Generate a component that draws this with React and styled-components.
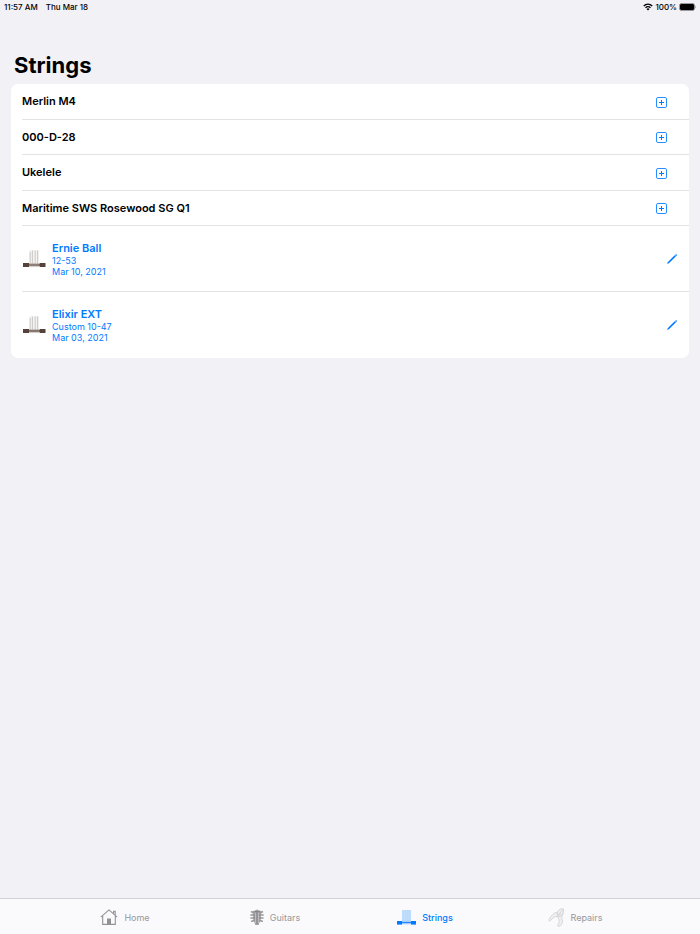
import React from 'react'
import styled, { createGlobalStyle } from 'styled-components'

const guitars = ['Merlin M4', '000-D-28', 'Ukelele', 'Maritime SWS Rosewood SG Q1']

const stringSets = [
  { name: 'Ernie Ball', gauge: '12-53', date: 'Mar 10, 2021' },
  { name: 'Elixir EXT', gauge: 'Custom 10-47', date: 'Mar 03, 2021' }
]

const WifiIcon = () => (
  <svg width='10' height='8' viewBox='0 0 20 16' fill='none' stroke='#000' strokeWidth='2.8'>
    <path d='M1.5 6 C6.5 1.2 13.5 1.2 18.5 6' />
    <path d='M5 9.6 C8 6.8 12 6.8 15 9.6' />
    <path d='M10 15 L7 11.8 C8.8 10.3 11.2 10.3 13 11.8 Z' fill='#000' stroke='none' />
  </svg>
)

const BatteryIcon = () => (
  <svg width='17' height='8' viewBox='0 0 17 8'>
    <rect x='0.5' y='0.5' width='15' height='7' rx='2' fill='#000' stroke='#98989d' />
    <path d='M16.2 2.8 V5.2 C17.2 4.8 17.2 3.2 16.2 2.8 Z' fill='#8e8e93' />
  </svg>
)

const PlusIcon = () => (
  <svg width='11' height='11' viewBox='0 0 11 11' fill='none' stroke='#007aff'>
    <rect x='0.5' y='0.5' width='10' height='10' rx='1.4' strokeOpacity='0.85' />
    <path d='M5.5 3 V8 M3 5.5 H8' />
  </svg>
)

const PencilIcon = () => (
  <svg width='10' height='10' viewBox='0 0 10 10'>
    <path d='M0.2 9.9 L0.7 8.2 L7.7 1.3 L8.8 2.4 L1.9 9.3 Z' fill='#007aff' />
    <path d='M8 1.1 L8.6 0.4 Q9.2 0 9.7 0.5 Q10.1 1 9.7 1.5 L9 2.2 Z' fill='#007aff' />
  </svg>
)

const BridgeIcon = () => (
  <svg width='24' height='20' viewBox='0 0 24 20'>
    <rect x='7' y='1' width='10' height='14' fill='#f5f4f3' />
    <path d='M8.2 3 V15 M10.4 1.5 V15 M13.2 1.5 V15 M15.6 1.5 V15' stroke='#c6c2bf' strokeWidth='0.9' />
    <rect x='1' y='14' width='6' height='4' fill='#56423a' />
    <rect x='17.5' y='14' width='6' height='4' fill='#56423a' />
    <path d='M7 14.6 H18' stroke='#b9b1ac' strokeWidth='0.8' />
    <path d='M7 16 H18' stroke='#5d4a42' strokeWidth='1.4' />
    <path d='M7 17.6 H18' stroke='#c4bcb6' strokeWidth='0.8' />
  </svg>
)

const HomeIcon = () => (
  <svg width='18' height='16' viewBox='0 0 18 16' fill='none' stroke='#929296' strokeWidth='1.1'>
    <path d='M0.8 8.2 L9 0.9 L17.2 8.2' />
    <path d='M2.7 7 V15.4 H15.3 V7' />
    <path d='M13.6 4.4 V2.2 H15.2 V6' />
    <rect x='7' y='9.5' width='4' height='6' fill='#929296' stroke='none' />
  </svg>
)

const HeadstockIcon = () => (
  <svg width='14' height='17' viewBox='0 0 14 17' fill='#a2a2a6'>
    <path d='M2.6 2 Q5 1.6 7 0.4 Q9 1.6 11.4 2 L10.6 12 L9.2 14 L8.8 16 H5.2 L4.8 14 L3.4 12 Z' />
    <path
      d='M1.6 2.8 L3 3.4 M12.4 2.8 L11 3.4 M0.9 6 H3 M13.1 6 H11 M1 9 H3.4 M13 9 H10.6 M1.8 12.2 L4 11.6 M12.2 12.2 L10 11.6'
      stroke='#98989c'
      strokeWidth='1.6'
      strokeLinecap='round'
    />
    <path d='M5.6 4 V14 M8.4 4 V14' stroke='#cdcdd0' strokeWidth='0.7' />
    <path d='M7 3 V15' stroke='#86868a' strokeWidth='1' />
    <path d='M3.6 6 H5 M9 6 H10.4 M3.8 9 H5 M9 9 H10.2 M4.2 2.6 H9.8' stroke='#7f7f84' strokeWidth='0.9' />
  </svg>
)

const StringsIcon = () => (
  <svg width='19' height='15' viewBox='0 0 19 15'>
    <rect x='5' y='0' width='9' height='12' fill='#c3e0fe' />
    <path d='M6.3 1 V11 M8.6 0 V11 M10.8 0 V11 M13 0 V11' stroke='#b0d5fc' strokeWidth='0.7' />
    <path d='M5 11.3 H14 M5 13.8 H14' stroke='#8fc4fc' strokeWidth='0.8' />
    <path d='M5 12.6 H14' stroke='#2388fa' strokeWidth='1.2' />
    <rect x='0' y='11' width='5' height='3.6' fill='#007aff' />
    <rect x='14' y='11' width='5' height='3.6' fill='#007aff' />
  </svg>
)

const PliersIcon = () => (
  <svg width='17' height='19' viewBox='0 0 17 19' fill='#efeff1' stroke='#cfcfd2' strokeWidth='0.8'>
    <path d='M9.4 4.4 Q7.4 4.2 6 5.4 Q1.6 8.6 0.7 12.4 Q1.6 14 2.8 12.4 Q4.6 9.2 7.4 8.6 L10 8.4 Z' />
    <path d='M15.2 5.2 Q13.6 8 13.8 10.4 Q15.6 13.4 13.6 16.4 Q12.2 18.8 10 18.2 Q8.8 17.2 10.4 16 Q12 13.8 10.8 11.6 Q9.6 9 10 7 Z' />
    <path d='M15.6 1 Q12 0 9.8 3 Q8.6 5.2 9.6 7.8 Q11.8 9 13.6 7.4 Q16 4.6 15.6 1 Z' />
    <path d='M14.8 1.6 L11.6 5.6' />
    <circle cx='11.4' cy='6.4' r='0.9' />
  </svg>
)

const tabs = [
  { label: 'Home', icon: HomeIcon },
  { label: 'Guitars', icon: HeadstockIcon },
  { label: 'Strings', icon: StringsIcon, active: true },
  { label: 'Repairs', icon: PliersIcon }
]

function App () {
  return (
    <>
      <GlobalStyle />
      <Page>
        <StatusBar>
          <StatusGroup $gap='8px'>
            <span>11:57 AM</span>
            <span>Thu Mar 18</span>
          </StatusGroup>
          <StatusGroup $gap='2px'>
            <WifiIcon />
            <span>100%</span>
            <BatteryIcon />
          </StatusGroup>
        </StatusBar>
        <Main>
          <Title>Strings</Title>
          <Card>
            <GuitarList>
              {guitars.map(guitar => (
                <GuitarRow key={guitar}>
                  <GuitarName>{guitar}</GuitarName>
                  <IconButton type='button' aria-label={`Add strings to ${guitar}`}>
                    <PlusIcon />
                  </IconButton>
                </GuitarRow>
              ))}
            </GuitarList>
            <StringList>
              {stringSets.map(set => (
                <StringRow key={set.name}>
                  <StringLink href='#strings'>
                    <BridgeIcon />
                    <div>
                      <StringName>{set.name}</StringName>
                      <Detail>{set.gauge}</Detail>
                      <Detail>{set.date}</Detail>
                    </div>
                  </StringLink>
                  <IconButton type='button' aria-label={`Edit ${set.name}`}>
                    <PencilIcon />
                  </IconButton>
                </StringRow>
              ))}
            </StringList>
          </Card>
        </Main>
        <TabBar>
          <TabList>
            {tabs.map(({ label, icon: Icon, active }) => (
              <Tab
                key={label}
                href={`#${label.toLowerCase()}`}
                $active={active}
                aria-current={active ? 'page' : undefined}
              >
                <Icon />
                {label}
              </Tab>
            ))}
          </TabList>
        </TabBar>
      </Page>
    </>
  )
}

export default App

const GlobalStyle = createGlobalStyle`
  * {
    box-sizing: border-box;
  }

  body {
    margin: 0;
    background: #f2f1f6;
    color: #000;
    font-family: Inter, 'Liberation Sans', sans-serif;
  }

  svg {
    display: block;
    flex: none;
  }
`

const Page = styled.div`
  display: flex;
  flex-direction: column;
  min-height: 100vh;
`

const StatusBar = styled.header`
  display: flex;
  justify-content: space-between;
  padding: 1px 4px 0;
  font-size: 8px;
  font-weight: 500;
  line-height: 12px;
`

const StatusGroup = styled.div`
  display: flex;
  align-items: center;
  gap: ${props => props.$gap};
`

const Main = styled.main`
  flex: 1;
  padding: 37px 11px 24px;
`

const Title = styled.h1`
  margin: 0 0 4px 3px;
  font-size: 22px;
  font-weight: 700;
  line-height: 30px;
`

const Card = styled.section`
  background: #fff;
  border-radius: 7px;
  overflow: hidden;
`

const GuitarList = styled.ul`
  display: grid;
  grid-auto-rows: 1fr;
  height: 142px;
  margin: 0;
  padding: 0 0 0 11px;
  list-style: none;
`

const GuitarRow = styled.li`
  display: flex;
  align-items: center;
  justify-content: space-between;
  padding: 2px 22px 0 0;
  border-bottom: 1px solid #e3e3e5;
`

const GuitarName = styled.span`
  padding-bottom: 2px;
  font-size: 11px;
  font-weight: 600;
  line-height: 16px;
`

const StringList = styled.ul`
  margin: 0;
  padding: 0 0 0 11px;
  list-style: none;
`

const StringRow = styled.li`
  display: flex;
  align-items: center;
  justify-content: space-between;
  height: 66px;
  padding-right: 12px;

  &:not(:last-child) {
    border-bottom: 1px solid #e3e3e5;
  }
`

const StringLink = styled.a`
  display: flex;
  flex: 1;
  align-items: center;
  gap: 6px;
  color: #007aff;
  text-decoration: none;
`

const StringName = styled.div`
  font-size: 11px;
  font-weight: 600;
  line-height: 14px;
`

const Detail = styled.div`
  font-size: 9px;
  line-height: 11px;
`

const IconButton = styled.button`
  padding: 0;
  border: 0;
  background: none;
  cursor: pointer;
`

const TabBar = styled.nav`
  position: sticky;
  bottom: 0;
  background: #fafafc;
  border-top: 1px solid #d2d2d6;
`

const TabList = styled.div`
  display: grid;
  grid-template-columns: repeat(4, 1fr);
  max-width: 600px;
  margin: 0 auto;
`

const Tab = styled.a`
  display: flex;
  align-items: center;
  justify-content: center;
  gap: 6px;
  height: 35px;
  padding-top: 1px;
  color: ${props => (props.$active ? '#007aff' : '#98989c')};
  font-size: 9px;
  font-weight: ${props => (props.$active ? 500 : 400)};
  text-decoration: none;
`
